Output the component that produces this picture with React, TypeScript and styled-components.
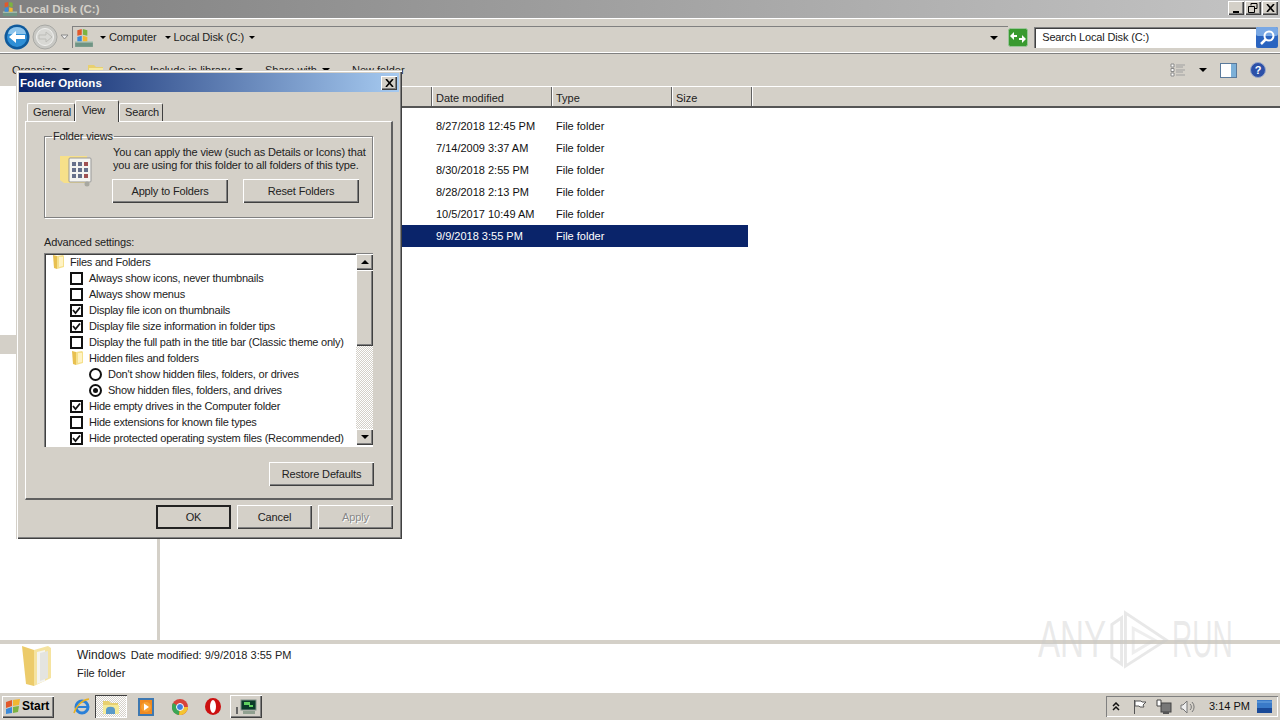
import styled, { createGlobalStyle } from "styled-components";

const face = "#d4d0c8";
const raised = "inset 1px 1px #fff, inset -1px -1px #404040, inset -2px -2px #808080";
const sunken = "inset 1px 1px #808080, inset 2px 2px #404040, inset -1px -1px #fff";

const GlobalStyle = createGlobalStyle`
  html, body { margin: 0; padding: 0; height: 720px; overflow: hidden; }
  * { box-sizing: border-box; }
  body { font: 11px/13px "Liberation Sans", Arial, sans-serif; color: #000; background: #fff; }
`;

const Shell = styled.div`
  position: relative;
  width: 1280px;
  height: 720px;
  display: flex;
  flex-direction: column;
  overflow: hidden;
`;

const TitleBar = styled.div`
  height: 18px;
  flex: none;
  display: flex;
  align-items: center;
  padding: 0 2px;
  background: linear-gradient(90deg, #808080, #c4c4c4);
  color: #d4d0c8;
  font-weight: bold;
  font-size: 11.5px;
  gap: 1px;
`;

const WindowButtons = styled.div`
  margin-left: auto;
  display: flex;
  gap: 1px;
  margin-top: -2px;
`;

const WindowButton = styled.div`
  width: 16px;
  height: 14px;
  background: ${face};
  box-shadow: ${raised};
  display: flex;
  align-items: center;
  justify-content: center;
`;

const AddressRow = styled.div`
  height: 36px;
  flex: none;
  display: flex;
  align-items: center;
  padding: 2px 2px 0 4px;
  background: ${face};
  border-top: 1px solid #fff;
  border-bottom: 1px solid #808080;
  box-shadow: inset 0 -1px #fff;
`;

const NavCircle = styled.div`
  width: 26px;
  height: 26px;
  flex: none;
  margin-right: 2px;
`;

const Breadcrumb = styled.div`
  width: 937px;
  height: 22px;
  margin-left: 3px;
  border-left: 1px solid #808080;
  border-top: 1px solid #808080;
  display: flex;
  align-items: center;
  padding-left: 1px;
  gap: 5px;
  color: #222;
  letter-spacing: -0.1px;
`;

const Crumb = styled.span<{ $gap?: number }>`
  display: inline-flex;
  align-items: center;
  gap: 3px;
  margin-left: ${(p) => p.$gap ?? 0}px;
`;

const Caret = styled.span<{ $size?: number }>`
  width: 0;
  height: 0;
  flex: none;
  border-left: ${(p) => p.$size ?? 3}px solid transparent;
  border-right: ${(p) => p.$size ?? 3}px solid transparent;
  border-top: ${(p) => p.$size ?? 3}px solid #000;
`;

const AddressEnd = styled.div`
  width: 20px;
  display: flex;
  justify-content: center;
  margin-left: auto;
  margin-right: 4px;
`;

const SearchBox = styled.div`
  width: 222px;
  height: 21px;
  margin-left: 6px;
  background: #fff;
  box-shadow: ${sunken};
  padding: 4px 0 0 8px;
  color: #222;
  white-space: nowrap;
  letter-spacing: -0.15px;
`;

const Toolbar = styled.div`
  height: 32px;
  flex: none;
  display: flex;
  align-items: center;
  background: ${face};
  padding: 0 14px 0 12px;
  color: #222;
`;

const ToolItem = styled.span<{ $w: number }>`
  display: inline-flex;
  align-items: center;
  gap: 5px;
  width: ${(p) => p.$w}px;
  flex: none;
  white-space: nowrap;
`;

const ToolRight = styled.div`
  margin-left: auto;
  display: flex;
  align-items: center;
  gap: 13px;
`;

const Middle = styled.div`
  flex: 1;
  min-height: 0;
  display: flex;
`;

const NavPane = styled.div`
  width: 160px;
  flex: none;
  background: #fff;
  border-right: 3px solid ${face};
  padding-top: 249px;
`;

const NavMarker = styled.div`
  width: 16px;
  height: 19px;
  background: ${face};
`;

const ListPane = styled.div`
  flex: 1;
  min-width: 0;
  background: #fff;
`;

const HeaderRow = styled.div`
  height: 22px;
  display: flex;
  background: ${face};
  border-top: 1px solid #fff;
  border-bottom: 2px solid #555;
`;

const HeaderCell = styled.div<{ $w: number }>`
  width: ${(p) => p.$w}px;
  flex: none;
  padding: 5px 0 0 4px;
  border-right: 1px solid #606060;
  box-shadow: 1px 0 #fff;
  color: #222;
`;

const Rows = styled.div`
  padding: 7px 0 0 4px;
  width: 588px;
`;

const Row = styled.div<{ $selected?: boolean }>`
  height: 22px;
  display: flex;
  align-items: center;
  background: ${(p) => (p.$selected ? "#0a246a" : "transparent")};
  color: ${(p) => (p.$selected ? "#fff" : "#111")};
`;

const NameCell = styled.div`
  width: 272px;
`;

const DateCell = styled.div`
  width: 120px;
`;

const Details = styled.div`
  height: 52px;
  flex: none;
  display: flex;
  background: #fff;
  border-top: 4px solid ${face};
  padding-left: 20px;
`;

const DetailText = styled.div`
  margin-left: 25px;
  padding-top: 5px;
  display: flex;
  flex-direction: column;
  gap: 5px;
`;

const DetailLine = styled.div`
  display: flex;
  align-items: baseline;
  gap: 5px;
  white-space: nowrap;
  color: #222;
`;

const DetailName = styled.span`
  font-size: 12px;
`;

const Taskbar = styled.div`
  height: 28px;
  flex: none;
  display: flex;
  align-items: center;
  background: ${face};
  border-top: 1px solid #fff;
  padding: 0 2px;
`;

const StartButton = styled.div`
  width: 52px;
  height: 22px;
  background: ${face};
  box-shadow: ${raised};
  display: flex;
  align-items: center;
  padding-left: 3px;
  font-weight: bold;
  font-size: 12px;
`;

const TaskIcons = styled.div`
  display: flex;
  align-items: center;
  margin-left: 15px;
`;

const TaskSlot = styled.div<{ $w: number; $active?: boolean; $raised?: boolean }>`
  width: ${(p) => p.$w}px;
  height: 23px;
  display: flex;
  align-items: center;
  justify-content: center;
  background: ${(p) => (p.$active ? `repeating-conic-gradient(${face} 0 25%, #fff 0 50%) 0 0/2px 2px` : "transparent")};
  box-shadow: ${(p) => (p.$active ? "inset 1px 1px #404040, inset -1px -1px #fff" : p.$raised ? raised : "none")};
`;

const Tray = styled.div`
  margin-left: auto;
  width: 172px;
  height: 21px;
  display: flex;
  align-items: center;
  padding-left: 6px;
  box-shadow: inset 1px 1px #808080, inset -1px -1px #fff;
`;

const TraySpace = styled.span<{ $w: number }>`
  width: ${(p) => p.$w}px;
  flex: none;
`;

const Clock = styled.span`
  color: #111;
  white-space: nowrap;
`;

const Watermark = styled.div`
  position: absolute;
  left: 1038px;
  top: 608px;
  display: flex;
  align-items: center;
  font-size: 51px;
  line-height: 64px;
  color: rgba(200, 200, 200, 0.38);
  pointer-events: none;
`;

const WatermarkText = styled.span<{ $w: number; $scale: number }>`
  display: block;
  width: ${(p) => p.$w}px;
  white-space: nowrap;
  transform: scaleX(${(p) => p.$scale});
  transform-origin: left center;
`;

const Dialog = styled.div`
  position: absolute;
  left: 16px;
  top: 70px;
  width: 386px;
  height: 469px;
  background: ${face};
  box-shadow: inset 1px 1px #d4d0c8, inset 2px 2px #fff, inset -1px -1px #404040, inset -2px -2px #808080;
  padding: 3px;
  letter-spacing: -0.15px;
`;

const DialogTitle = styled.div`
  height: 19px;
  display: flex;
  align-items: center;
  justify-content: space-between;
  padding: 1px 2px 0 1px;
  background: linear-gradient(90deg, #0a246a, #a6caf0);
  color: #fff;
  font-weight: bold;
  font-size: 11.5px;
  letter-spacing: 0;
`;

const DialogClose = styled.div`
  width: 16px;
  height: 14px;
  background: ${face};
  box-shadow: ${raised};
  display: flex;
  align-items: center;
  justify-content: center;
`;

const Tabs = styled.div`
  height: 21px;
  margin-top: 8px;
  padding-left: 8px;
  display: flex;
  align-items: flex-end;
`;

const Tab = styled.div<{ $active?: boolean; $w: number }>`
  width: ${(p) => p.$w}px;
  height: ${(p) => (p.$active ? 22 : 18)}px;
  margin-bottom: ${(p) => (p.$active ? -1 : 0)}px;
  padding: ${(p) => (p.$active ? "3px 0 0 6px" : "2px 0 0 5px")};
  background: ${face};
  position: relative;
  z-index: ${(p) => (p.$active ? 1 : 0)};
  border-top: 1px solid #fff;
  border-left: 1px solid #fff;
  border-right: 1px solid #404040;
  border-radius: 2px 2px 0 0;
  color: #222;
`;

const TabPanel = styled.div`
  height: 379px;
  margin: 0 6px;
  padding: 8px 18px 0 18px;
  border-top: 1px solid #fff;
  border-left: 1px solid #fff;
  border-right: 2px solid #606060;
  border-bottom: 2px solid #606060;
`;

const Group = styled.fieldset`
  margin: 0;
  padding: 2px 4px 0 13px;
  height: 88px;
  min-width: 0;
  border: 1px solid #808080;
  box-shadow: 1px 1px #fff, inset 1px 1px #fff;
`;

const GroupLegend = styled.legend`
  margin-left: -6px;
  padding: 0 1px;
  color: #222;
`;

const GroupBody = styled.div`
  display: flex;
  gap: 20px;
`;

const GroupIcon = styled.div`
  margin-top: 8px;
  width: 36px;
  flex: none;
  margin-right: -1px;
`;

const GroupText = styled.div`
  width: 262px;
  padding-top: 1px;
  color: #222;
  white-space: nowrap;
`;

const GroupButtons = styled.div`
  display: flex;
  gap: 15px;
  margin: 7px 0 0 -1px;
`;

const Button = styled.div<{ $w: number; $default?: boolean; $disabled?: boolean }>`
  width: ${(p) => p.$w}px;
  height: 24px;
  flex: none;
  background: ${face};
  box-shadow: ${(p) => (p.$default ? "inset 0 0 0 2px #222" : raised)};
  display: flex;
  align-items: center;
  justify-content: center;
  color: ${(p) => (p.$disabled ? "#888" : "#222")};
  text-shadow: ${(p) => (p.$disabled ? "1px 1px #fff" : "none")};
`;

const AdvancedLabel = styled.div`
  margin-top: 18px;
  height: 17px;
  color: #222;
`;

const SettingsBox = styled.div`
  width: 329px;
  height: 194px;
  padding: 1px 0 0 1px;
  background: #fff;
  display: flex;
  box-shadow: ${sunken};
`;

const SettingsList = styled.div`
  width: 311px;
  overflow: hidden;
`;

const SettingRow = styled.div<{ $level: number }>`
  height: 16px;
  display: flex;
  align-items: center;
  padding-left: ${(p) => 6 + p.$level * 19}px;
  white-space: nowrap;
  color: #222;
  letter-spacing: -0.22px;
`;

const RowMark = styled.span`
  width: 19px;
  flex: none;
  display: flex;
  align-items: center;
`;

const CheckBox = styled.span`
  width: 13px;
  height: 13px;
  border: 2px solid #111;
  display: flex;
  align-items: center;
  justify-content: center;
`;

const Radio = styled.span`
  width: 13px;
  height: 13px;
  border: 2px solid #111;
  border-radius: 50%;
  display: flex;
  align-items: center;
  justify-content: center;
`;

const RadioDot = styled.span`
  width: 5px;
  height: 5px;
  border-radius: 50%;
  background: #111;
`;

const ScrollBar = styled.div`
  width: 17px;
  height: 191px;
  display: flex;
  flex-direction: column;
  background: repeating-conic-gradient(${face} 0 25%, #fff 0 50%) 0 0/2px 2px;
`;

const ScrollButton = styled.div`
  height: 16px;
  flex: none;
  background: ${face};
  box-shadow: ${raised};
  display: flex;
  align-items: center;
  justify-content: center;
`;

const ScrollThumb = styled.div`
  height: 76px;
  flex: none;
  background: ${face};
  box-shadow: ${raised};
`;

const ScrollSpace = styled.div`
  flex: 1;
`;

const ArrowUp = styled.span`
  border-left: 4px solid transparent;
  border-right: 4px solid transparent;
  border-bottom: 4px solid #000;
`;

const RestoreRow = styled.div`
  display: flex;
  justify-content: flex-end;
  margin: 15px -1px 0 0;
`;

const DialogFooter = styled.div`
  display: flex;
  justify-content: flex-end;
  gap: 6px;
  margin-top: 5px;
  padding-right: 6px;
`;

const Folder = ({ w = 14, h = 16 }: { w?: number; h?: number }) => (
  <svg width={w} height={h} viewBox="0 0 14 16">
    <path d="M2 1l4 1v13l-3-1z" fill="#e8c050" />
    <path d="M6 2l6-1 1 1v11l-7 2z" fill="#f5e08c" />
    <path d="M8 3h4v9l-4 1z" fill="#fff3c4" />
  </svg>
);

const DriveIcon = ({ size = 18 }: { size?: number }) => (
  <svg width={size} height={size} viewBox="0 0 18 18">
    <path d="M1 12h16v5H1z" fill="#6f9484" />
    <path d="M1 12h16v1H1z" fill="#c9d6c9" />
    <path d="M3 2l4-1v5l-4 1z" fill="#e2592b" />
    <path d="M8 1l4 1v5l-4-1z" fill="#7cb342" />
    <path d="M3 8l4-1v5H3z" fill="#3b8ad9" />
    <path d="M8 7l4 1v4H8z" fill="#f2b632" />
  </svg>
);

const BackButton = () => (
  <svg width="26" height="26" viewBox="0 0 26 26">
    <circle cx="13" cy="13" r="12.500" fill="#0f5a9c" />
    <circle cx="13" cy="13" r="10" fill="#2f8fd6" />
    <path d="M4 10a9 7 0 0 1 18 0z" fill="#8cc4ec" />
    <path d="M5 13l7-6v4h9v4h-9v4z" fill="#fff" />
  </svg>
);

const ForwardButton = () => (
  <svg width="26" height="26" viewBox="0 0 26 26">
    <circle cx="13" cy="13" r="12" fill="#c8c8c4" stroke="#a8a8a4" />
    <circle cx="13" cy="13" r="8.500" fill="#d8d8d4" stroke="#f0f0ee" />
    <path d="M20 13l-6-5v3H7v4h7v3z" fill="none" stroke="#bdbdb8" />
  </svg>
);

const SmallDropdown = () => (
  <svg width="9" height="6" viewBox="0 0 9 6">
    <path d="M1 1h7L4.500 5z" fill="#eee" stroke="#888" />
  </svg>
);

const RefreshIcon = () => (
  <svg width="20" height="19" viewBox="0 0 20 19">
    <rect x="0.500" y="0.500" width="19" height="18" rx="2" fill="#3a9a30" stroke="#9ac79a" />
    <path d="M2 8l4-4v3h3v2H6v3zM18 11l-4 4v-3h-3v-2h3V7z" fill="#fff" />
  </svg>
);

const SearchButton = () => (
  <svg width="22" height="21" viewBox="0 0 22 21">
    <rect width="22" height="21" rx="2" fill="#2a64c0" />
    <rect width="22" height="9" rx="2" fill="#79a8e4" />
    <circle cx="13" cy="9" r="4.500" fill="none" stroke="#fff" strokeWidth="2" />
    <path d="M10 12l-5 5" stroke="#fff" strokeWidth="2.500" />
  </svg>
);

const ViewsIcon = () => (
  <svg width="16" height="14" viewBox="0 0 16 14">
    <path d="M1 1h3v3H1zM1 5.500h3v3H1zM1 10h3v3H1z" fill="#fff" stroke="#8a8a8a" />
    <path d="M6 2h9M6 4h7M6 7h9M6 9h7M6 12h9" stroke="#a0a0a0" />
  </svg>
);

const PreviewIcon = () => (
  <svg width="17" height="15" viewBox="0 0 17 15">
    <rect x="0.500" y="0.500" width="16" height="14" fill="#fff" stroke="#5a7a9c" />
    <rect x="11" y="1" width="5" height="13" fill="#7cb0d8" />
  </svg>
);

const HelpIcon = () => (
  <svg width="16" height="16" viewBox="0 0 16 16">
    <circle cx="8" cy="8" r="7.500" fill="#2c50a8" stroke="#9aa8c8" />
    <text x="8" y="12" textAnchor="middle" fontSize="11" fontWeight="bold" fill="#fff" fontFamily="Liberation Sans">?</text>
  </svg>
);

const CloseGlyph = () => (
  <svg width="9" height="8" viewBox="0 0 9 8">
    <path d="M1 0l7 8M8 0L1 8" stroke="#000" strokeWidth="1.600" />
  </svg>
);

const RestoreGlyph = () => (
  <svg width="10" height="10" viewBox="0 0 10 10">
    <path d="M3 2.500V.500h6v5H7M.500 3.500h6v6h-6z" fill="none" stroke="#000" />
  </svg>
);

const MinGlyph = () => (
  <svg width="9" height="9" viewBox="0 0 9 9">
    <path d="M1 7h6v2H1z" fill="#000" />
  </svg>
);

const Check = () => (
  <svg width="9" height="9" viewBox="0 0 9 9">
    <path d="M1 4l2.500 3L8 1.500" fill="none" stroke="#111" strokeWidth="1.800" />
  </svg>
);

const FolderViewIcon = () => (
  <svg width="36" height="36" viewBox="0 0 36 36">
    <path d="M2 3h27v27H6l-4-3z" fill="#f7e08a" />
    <rect x="11" y="5" width="22" height="24" rx="1" fill="#f4f4f0" stroke="#999" />
    <path d="M14 9h4v4h-4zM20 9h4v4h-4zM14 15h4v4h-4zM20 15h4v4h-4zM26 15h4v4h-4zM14 21h4v4h-4zM20 21h4v4h-4z" fill="#66708a" />
    <path d="M26 9h4v4h-4zM26 21h4v4h-4z" fill="#a05050" />
    <circle cx="29" cy="31" r="2.500" fill="#a8a8a0" />
  </svg>
);

const DetailFolder = () => (
  <svg width="32" height="45" viewBox="0 0 32 45">
    <path d="M2 2l12 4v36L6 40z" fill="#eccb6a" />
    <path d="M14 6l14-4 3 2v30l-17 8z" fill="#f5e3a0" />
    <path d="M17 8l8-2v31l-8 3z" fill="#f4f4f0" />
    <path d="M20 9l8-2v27l-8 3z" fill="#e4e4e0" />
  </svg>
);

const ToolFolder = () => (
  <svg width="16" height="13" viewBox="0 0 16 13">
    <path d="M0 1h6l2 2h7v9H0z" fill="#e8d070" />
    <path d="M1 4h14v8H1z" fill="#f6ea9e" />
  </svg>
);

const IeIcon = () => (
  <svg width="18" height="18" viewBox="0 0 18 18">
    <circle cx="9" cy="9" r="6" fill="none" stroke="#2a80d8" strokeWidth="3" />
    <path d="M4 9h10" stroke="#2a80d8" strokeWidth="2" />
    <path d="M1 15C3 8 9 2 16 1" fill="none" stroke="#e8b020" strokeWidth="1.500" />
  </svg>
);

const ExplorerIcon = () => (
  <svg width="18" height="16" viewBox="0 0 18 16">
    <path d="M1 2h6l2 2h7v11H1z" fill="#e8d070" />
    <path d="M1 6h16v9H1z" fill="#f4ea9a" />
    <path d="M4 15v-4a4 3 0 0 1 9 0v4z" fill="#5a9ac8" />
  </svg>
);

const MediaIcon = () => (
  <svg width="16" height="18" viewBox="0 0 16 18">
    <rect width="16" height="18" fill="#3e78b0" />
    <rect x="2" y="2" width="12" height="14" fill="#f08a20" />
    <circle cx="8" cy="9" r="5" fill="#f8a030" />
    <path d="M6 5.500l5 3.500-5 3.500z" fill="#fff" />
  </svg>
);

const ChromeIcon = () => (
  <svg width="16" height="16" viewBox="0 0 16 16">
    <circle cx="8" cy="8" r="8" fill="#d8433a" />
    <path d="M8 8L1 4a8 8 0 0 0 6 12z" fill="#3aa655" />
    <path d="M8 8h8a8 8 0 0 1-9 8z" fill="#f4c430" />
    <circle cx="8" cy="8" r="3.500" fill="#3d7fe0" stroke="#fff" />
  </svg>
);

const OperaIcon = () => (
  <svg width="16" height="17" viewBox="0 0 16 17">
    <ellipse cx="8" cy="8.500" rx="8" ry="8.500" fill="#cc1010" />
    <ellipse cx="8" cy="8.500" rx="3" ry="6.500" fill="#fff" />
  </svg>
);

const ConsoleIcon = () => (
  <svg width="24" height="16" viewBox="0 0 24 16">
    <rect x="7" y="1" width="15" height="10" fill="#0a3a2a" stroke="#809088" />
    <path d="M10 3h6v3h-6zM15 6h4v2h-4z" fill="#60d060" />
    <path d="M9 12h12v3H9z" fill="#90a090" />
    <path d="M2 8h2v7H2z" fill="#666" />
  </svg>
);

const StartFlag = () => (
  <svg width="17" height="17" viewBox="0 0 17 17">
    <path d="M1 4l6-2v6l-6 2z" fill="#e2592b" />
    <path d="M8 2l7-1-1 6-6 1z" fill="#f2b632" />
    <path d="M1 11l6-2v6l-6 1z" fill="#3b8ad9" />
    <path d="M8 9l6-1-1 6-5 1z" fill="#7cb342" />
  </svg>
);

const TrayUp = () => (
  <svg width="8" height="9" viewBox="0 0 8 9">
    <path d="M1 4l3-3 3 3M1 8l3-3 3 3" fill="none" stroke="#111" strokeWidth="1.500" />
  </svg>
);

const TrayFlag = () => (
  <svg width="16" height="16" viewBox="0 0 16 16">
    <path d="M2.500 1v14" stroke="#555" />
    <path d="M3 2h6l1 1h4l-3 3 1 2H8L7 7H3z" fill="#fff" stroke="#555" />
  </svg>
);

const TrayNetwork = () => (
  <svg width="16" height="16" viewBox="0 0 16 16">
    <rect x="5" y="4" width="10" height="9" fill="#777" stroke="#444" />
    <path d="M1 1h4v6H1z" fill="#fff" stroke="#444" />
    <path d="M7 14h6" stroke="#555" strokeWidth="2" />
  </svg>
);

const TraySound = () => (
  <svg width="16" height="16" viewBox="0 0 16 16">
    <path d="M1 6h2l4-4v12l-4-4H1z" fill="#eee" stroke="#777" />
    <path d="M10 5a4 4 0 0 1 0 6M12 3a7 7 0 0 1 0 10" fill="none" stroke="#777" />
  </svg>
);

const ShowDesktop = () => (
  <svg width="15" height="13" viewBox="0 0 15 13">
    <rect width="15" height="13" fill="#3a7ac8" />
    <rect y="8" width="15" height="5" fill="#1a4a98" />
    <path d="M0 2h15" stroke="#70a8e0" />
  </svg>
);

const WatermarkLogo = () => (
  <svg width="64" height="64" viewBox="0 0 66 64">
    <path d="M4 16L14 9v48L4 50zM18 4l42 28-42 27z" fill="none" stroke="rgba(200,200,200,0.42)" strokeWidth="3" />
    <path d="M26 20l22 12-22 13z" fill="none" stroke="rgba(200,200,200,0.3)" strokeWidth="3" />
  </svg>
);

type Setting = { label: string; level: number; kind: "folder" | "check" | "radio"; on?: boolean };

const settings: Setting[] = [
  { label: "Files and Folders", level: 0, kind: "folder" },
  { label: "Always show icons, never thumbnails", level: 1, kind: "check" },
  { label: "Always show menus", level: 1, kind: "check" },
  { label: "Display file icon on thumbnails", level: 1, kind: "check", on: true },
  { label: "Display file size information in folder tips", level: 1, kind: "check", on: true },
  { label: "Display the full path in the title bar (Classic theme only)", level: 1, kind: "check" },
  { label: "Hidden files and folders", level: 1, kind: "folder" },
  { label: "Don't show hidden files, folders, or drives", level: 2, kind: "radio" },
  { label: "Show hidden files, folders, and drives", level: 2, kind: "radio", on: true },
  { label: "Hide empty drives in the Computer folder", level: 1, kind: "check", on: true },
  { label: "Hide extensions for known file types", level: 1, kind: "check" },
  { label: "Hide protected operating system files (Recommended)", level: 1, kind: "check", on: true },
];

const rows = [
  "8/27/2018 12:45 PM",
  "7/14/2009 3:37 AM",
  "8/30/2018 2:55 PM",
  "8/28/2018 2:13 PM",
  "10/5/2017 10:49 AM",
  "9/9/2018 3:55 PM",
];

const SettingMark = ({ item }: { item: Setting }) => {
  if (item.kind === "folder") return <Folder />;
  if (item.kind === "check") return <CheckBox>{item.on && <Check />}</CheckBox>;
  return <Radio>{item.on && <RadioDot />}</Radio>;
};

const App = () => {
  return (
    <Shell>
      <GlobalStyle />
      <TitleBar>
        <DriveIcon size={16} />
        Local Disk (C:)
        <WindowButtons>
          <WindowButton><MinGlyph /></WindowButton>
          <WindowButton><RestoreGlyph /></WindowButton>
          <WindowButton><CloseGlyph /></WindowButton>
        </WindowButtons>
      </TitleBar>
      <AddressRow>
        <NavCircle><BackButton /></NavCircle>
        <NavCircle><ForwardButton /></NavCircle>
        <SmallDropdown />
        <Breadcrumb>
          <DriveIcon size={20} />
          <Crumb $gap={1}><Caret />Computer</Crumb>
          <Crumb $gap={3}><Caret />Local Disk (C:)</Crumb>
          <Caret />
          <AddressEnd><Caret $size={4} /></AddressEnd>
        </Breadcrumb>
        <RefreshIcon />
        <SearchBox>Search Local Disk (C:)</SearchBox>
        <SearchButton />
      </AddressRow>
      <Toolbar>
        <ToolItem $w={76}>Organize<Caret $size={4} /></ToolItem>
        <ToolItem $w={62}><ToolFolder />Open</ToolItem>
        <ToolItem $w={115}>Include in library<Caret $size={4} /></ToolItem>
        <ToolItem $w={87}>Share with<Caret $size={4} /></ToolItem>
        <ToolItem $w={70}>New folder</ToolItem>
        <ToolRight>
          <ViewsIcon />
          <Caret $size={4} />
          <PreviewIcon />
          <HelpIcon />
        </ToolRight>
      </Toolbar>
      <Middle>
        <NavPane><NavMarker /></NavPane>
        <ListPane>
          <HeaderRow>
            <HeaderCell $w={272} />
            <HeaderCell $w={120}>Date modified</HeaderCell>
            <HeaderCell $w={120}>Type</HeaderCell>
            <HeaderCell $w={80}>Size</HeaderCell>
          </HeaderRow>
          <Rows>
            {rows.map((date, i) => (
              <Row key={date} $selected={i === rows.length - 1}>
                <NameCell />
                <DateCell>{date}</DateCell>
                File folder
              </Row>
            ))}
          </Rows>
        </ListPane>
      </Middle>
      <Details>
        <DetailFolder />
        <DetailText>
          <DetailLine>
            <DetailName>Windows</DetailName>
            Date modified: 9/9/2018 3:55 PM
          </DetailLine>
          <DetailLine>File folder</DetailLine>
        </DetailText>
      </Details>
      <Taskbar>
        <StartButton><StartFlag />Start</StartButton>
        <TaskIcons>
          <TaskSlot $w={26}><IeIcon /></TaskSlot>
          <TaskSlot $w={32} $active><ExplorerIcon /></TaskSlot>
          <TaskSlot $w={37}><MediaIcon /></TaskSlot>
          <TaskSlot $w={31}><ChromeIcon /></TaskSlot>
          <TaskSlot $w={35}><OperaIcon /></TaskSlot>
          <TaskSlot $w={32} $raised><ConsoleIcon /></TaskSlot>
        </TaskIcons>
        <Tray>
          <TrayUp />
          <TraySpace $w={12} />
          <TrayFlag />
          <TraySpace $w={8} />
          <TrayNetwork />
          <TraySpace $w={8} />
          <TraySound />
          <TraySpace $w={13} />
          <Clock>3:14 PM</Clock>
          <TraySpace $w={7} />
          <ShowDesktop />
        </Tray>
      </Taskbar>
      <Watermark>
        <WatermarkText $w={70} $scale={0.65}>ANY</WatermarkText>
        <WatermarkLogo />
        <WatermarkText $w={62} $scale={0.55}>RUN</WatermarkText>
      </Watermark>
      <Dialog>
        <DialogTitle>
          Folder Options
          <DialogClose><CloseGlyph /></DialogClose>
        </DialogTitle>
        <Tabs>
          <Tab $w={48}>General</Tab>
          <Tab $active $w={44}>View</Tab>
          <Tab $w={44}>Search</Tab>
        </Tabs>
        <TabPanel>
          <Group>
            <GroupLegend>Folder views</GroupLegend>
            <GroupBody>
              <GroupIcon><FolderViewIcon /></GroupIcon>
              <GroupText>
                You can apply the view (such as Details or Icons) that
                <br />
                you are using for this folder to all folders of this type.
                <GroupButtons>
                  <Button $w={116}>Apply to Folders</Button>
                  <Button $w={116}>Reset Folders</Button>
                </GroupButtons>
              </GroupText>
            </GroupBody>
          </Group>
          <AdvancedLabel>Advanced settings:</AdvancedLabel>
          <SettingsBox>
            <SettingsList>
              {settings.map((item) => (
                <SettingRow key={item.label} $level={item.level}>
                  <RowMark><SettingMark item={item} /></RowMark>
                  {item.label}
                </SettingRow>
              ))}
            </SettingsList>
            <ScrollBar>
              <ScrollButton><ArrowUp /></ScrollButton>
              <ScrollThumb />
              <ScrollSpace />
              <ScrollButton><Caret $size={4} /></ScrollButton>
            </ScrollBar>
          </SettingsBox>
          <RestoreRow><Button $w={105}>Restore Defaults</Button></RestoreRow>
        </TabPanel>
        <DialogFooter>
          <Button $w={75} $default>OK</Button>
          <Button $w={75}>Cancel</Button>
          <Button $w={75} $disabled>Apply</Button>
        </DialogFooter>
      </Dialog>
    </Shell>
  );
};

export default App;
